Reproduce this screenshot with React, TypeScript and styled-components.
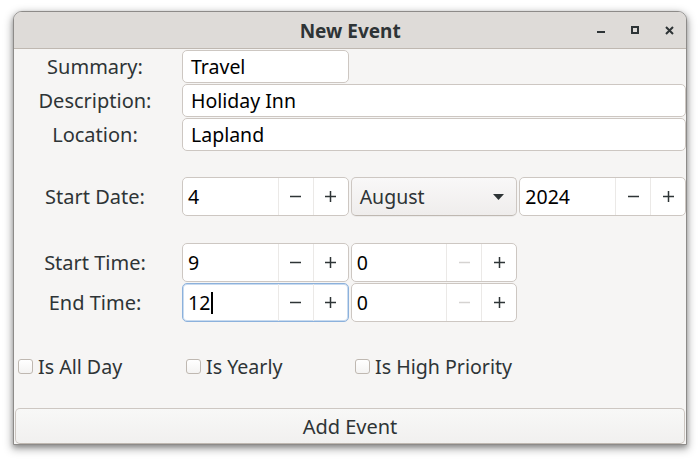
import React from "react";
import styled, { createGlobalStyle } from "styled-components";

const Global = createGlobalStyle`
  html, body { margin: 0; padding: 0; background: #ffffff; }
  body { font-family: "Noto Sans", "Open Sans", sans-serif; color: #2e3436; }
  * { box-sizing: border-box; }
`;

const Page = styled.div`
  width: 700px;
  height: 462px;
  padding: 11px 0 0 13px;
`;

const Window = styled.div`
  width: 674px;
  height: 434px;
  border: 1px solid #8d8b89;
  border-radius: 9px 9px 0 0;
  background: #f6f5f4;
  box-shadow: 0 3px 9px 1px rgba(0, 0, 0, 0.35), 0 2px 4px rgba(0, 0, 0, 0.2);
  display: flex;
  flex-direction: column;
  overflow: hidden;
`;

const TitleBar = styled.div`
  height: 37px;
  flex: none;
  background: #dedbd8;
  border-bottom: 1px solid #bfb8b1;
  position: relative;
  display: flex;
  align-items: center;
  justify-content: center;
`;

const Title = styled.div`
  font-weight: 700;
  font-size: 20px;
  color: #2e3436;
  line-height: 1;
  padding-top: 1px;
  transform: scaleX(0.95);
`;

const Controls = styled.div`
  position: absolute;
  right: 0;
  top: 0;
  height: 100%;
  display: flex;
  align-items: center;
`;

const CtlButton = styled.div`
  width: 34px;
  height: 24px;
  display: flex;
  align-items: center;
  justify-content: center;
  color: #2e3436;
`;

const Body = styled.div`
  flex: 1;
  display: flex;
  flex-direction: column;
  padding-top: 1px;
`;

const Row = styled.div<{ $top?: number; $height: number }>`
  display: grid;
  grid-template-columns: 166px repeat(3, 1fr);
  column-gap: 2px;
  height: ${(p) => p.$height}px;
  margin-top: ${(p) => p.$top ?? 0}px;
`;

const Label = styled.div`
  display: flex;
  align-items: center;
  justify-content: center;
  font-size: 20px;
  color: #2e3436;
  padding-right: 4px;
`;

const Entry = styled.div<{ $span?: number }>`
  grid-column: span ${(p) => p.$span ?? 1};
  background: #ffffff;
  border: 1px solid #cdc7c2;
  border-radius: 5px;
  display: flex;
  align-items: center;
  padding-left: 8px;
  font-size: 19.5px;
  color: #000000;
  overflow: hidden;
`;

const Caret = styled.span`
  display: inline-block;
  width: 1.5px;
  height: 22px;
  background: #000;
  margin-left: 1px;
  vertical-align: middle;
`;

const Spin = styled.div<{ $focus?: boolean }>`
  background: #ffffff;
  border: 1px solid ${(p) => (p.$focus ? "#8cb1dc" : "#cdc7c2")};
  box-shadow: ${(p) => (p.$focus ? "inset 0 0 0 1px #c9dbef" : "none")};
  border-radius: 5px;
  display: flex;
  overflow: hidden;
`;

const SpinText = styled.div`
  flex: 1;
  display: flex;
  align-items: center;
  padding-left: 5px;
  font-size: 19.5px;
  color: #000;
  min-width: 0;
`;

const SpinBtn = styled.div<{ $disabled?: boolean }>`
  width: 35px;
  flex: none;
  border-left: 1px solid #ebe9e7;
  display: flex;
  align-items: center;
  justify-content: center;
  color: ${(p) => (p.$disabled ? "#d5d3d1" : "#2e3436")};
`;

const Combo = styled.div`
  background: linear-gradient(#f9f8f8, #efedec);
  border: 1px solid #cdc7c2;
  border-bottom-color: #bfb8b1;
  border-radius: 5px;
  box-shadow: 0 1px rgba(0, 0, 0, 0.04);
  display: flex;
  align-items: center;
  justify-content: space-between;
  padding: 0 12px 0 8px;
  font-size: 19.5px;
  color: #2e3436;
`;

const CheckCell = styled.label`
  display: flex;
  align-items: center;
  gap: 5px;
  padding-left: 4px;
  font-size: 20px;
  color: #2e3436;
`;

const CheckText = styled.span`
  display: inline-block;
  transform: scaleX(0.98);
  transform-origin: left center;
`;

const Box = styled.span`
  width: 15px;
  height: 15px;
  flex: none;
  border: 1px solid #bfb8b1;
  border-radius: 3px;
  background: linear-gradient(#ffffff, #f4f3f2);
`;

const AddButton = styled.div`
  margin: auto 1px 0 1px;
  height: 36px;
  border: 1px solid #cdc7c2;
  border-bottom-color: #bfb8b1;
  border-radius: 5px;
  background: linear-gradient(#f8f8f7, #f1f0ef);
  display: flex;
  align-items: center;
  justify-content: center;
  font-size: 20px;
  color: #2e3436;
`;

const Minus = () => (
  <svg width="11" height="11" viewBox="0 0 11 11">
    <rect x="0" y="4.75" width="11" height="1.5" fill="currentColor" />
  </svg>
);
const Plus = () => (
  <svg width="11" height="11" viewBox="0 0 11 11">
    <rect x="0" y="4.75" width="11" height="1.5" fill="currentColor" />
    <rect x="4.75" y="0" width="1.5" height="11" fill="currentColor" />
  </svg>
);

const SpinButton: React.FC<{ value: React.ReactNode; minusDisabled?: boolean; focus?: boolean }> = ({
  value,
  minusDisabled,
  focus,
}) => (
  <Spin $focus={focus}>
    <SpinText>{value}</SpinText>
    <SpinBtn $disabled={minusDisabled}>
      <Minus />
    </SpinBtn>
    <SpinBtn>
      <Plus />
    </SpinBtn>
  </Spin>
);

export default function App() {
  return (
    <Page>
      <Global />
      <Window>
        <TitleBar>
          <Title>New Event</Title>
          <Controls>
            <CtlButton>
              <svg width="8" height="8" viewBox="0 0 8 8">
                <rect x="0" y="5" width="8" height="2" fill="currentColor" />
              </svg>
            </CtlButton>
            <CtlButton>
              <svg width="8" height="8" viewBox="0 0 8 8">
                <rect x="1" y="1" width="6" height="6" fill="none" stroke="currentColor" strokeWidth="2" />
              </svg>
            </CtlButton>
            <CtlButton>
              <svg width="9" height="9" viewBox="0 0 9 9">
                <path d="M1 1 L8 8 M8 1 L1 8" stroke="currentColor" strokeWidth="2" />
              </svg>
            </CtlButton>
          </Controls>
        </TitleBar>
        <Body>
          <Row $height={33}>
            <Label>Summary:</Label>
            <Entry>Travel</Entry>
          </Row>
          <Row $height={33} $top={1}>
            <Label>Description:</Label>
            <Entry $span={3}>Holiday Inn</Entry>
          </Row>
          <Row $height={33} $top={1}>
            <Label>Location:</Label>
            <Entry $span={3}>Lapland</Entry>
          </Row>
          <Row $height={39} $top={26}>
            <Label>Start Date:</Label>
            <SpinButton value="4" />
            <Combo>
              <span>August</span>
              <svg width="11" height="6" viewBox="0 0 11 6">
                <path d="M0 0 H11 L5.5 6 Z" fill="#2e3436" />
              </svg>
            </Combo>
            <SpinButton value="2024" />
          </Row>
          <Row $height={39} $top={27}>
            <Label>Start Time:</Label>
            <SpinButton value="9" />
            <SpinButton value="0" minusDisabled />
          </Row>
          <Row $height={39} $top={1}>
            <Label>End Time:</Label>
            <SpinButton
              focus
              value={
                <>
                  12
                  <Caret />
                </>
              }
            />
            <SpinButton value="0" minusDisabled />
          </Row>
          <Row $height={26} $top={31}>
            <CheckCell>
              <Box />
              <CheckText>Is All Day</CheckText>
            </CheckCell>
            <CheckCell>
              <Box />
              <CheckText>Is Yearly</CheckText>
            </CheckCell>
            <CheckCell>
              <Box />
              <CheckText>Is High Priority</CheckText>
            </CheckCell>
          </Row>
          <AddButton>Add Event</AddButton>
        </Body>
      </Window>
    </Page>
  );
}
